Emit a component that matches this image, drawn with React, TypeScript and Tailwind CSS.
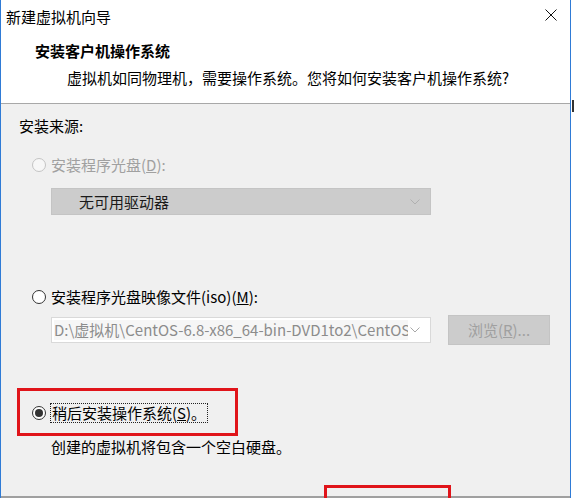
import React from "react";

const font = { fontFamily: '"Noto Sans CJK SC", "Noto Sans", sans-serif' };

function Radio({ state }: { state: "disabled" | "off" | "on" }) {
  if (state === "disabled") {
    return <span className="block w-[14px] h-[14px] rounded-full border border-[#c4c4c4] bg-[#f7f7f7] shrink-0" />;
  }
  if (state === "off") {
    return <span className="block w-[14px] h-[14px] rounded-full border border-[#333333] bg-white shrink-0" />;
  }
  return (
    <span className="flex items-center justify-center w-[14px] h-[14px] rounded-full border border-[#333333] bg-white shrink-0">
      <span className="block w-[8px] h-[8px] rounded-full bg-[#333333]" />
    </span>
  );
}

function Chevron({ color }: { color: string }) {
  return (
    <svg width="10" height="6" viewBox="0 0 10 6" className="shrink-0">
      <polyline points="0.5,0.5 5,5 9.5,0.5" fill="none" stroke={color} strokeWidth="1" />
    </svg>
  );
}

export default function App() {
  return (
    <div className="flex w-[574px] h-[498px] bg-white overflow-hidden" style={font}>
      <div className="relative flex flex-col w-[571px] h-[498px] border-x border-[#2f7bd6] shrink-0">
        {/* Header */}
        <div className="bg-white h-[104px] border-b border-[#a8a8a8] shrink-0 flex flex-col">
          <div className="flex items-start mt-[7px] pl-[5px] pr-[13px] h-[20px]">
            <span className="text-[15px] leading-[20px] text-black">新建虚拟机向导</span>
            <div className="flex-1" />
            <svg width="12" height="12" viewBox="0 0 12 12" className="mt-[2px]">
              <line x1="0.5" y1="0.5" x2="11.5" y2="11.5" stroke="#111" strokeWidth="1" />
              <line x1="11.5" y1="0.5" x2="0.5" y2="11.5" stroke="#111" strokeWidth="1" />
            </svg>
          </div>
          <div className="mt-[14px] pl-[34px] text-[15px] leading-[20px] font-bold text-black">安装客户机操作系统</div>
          <div className="mt-[7px] pl-[66px] text-[15px] leading-[20px] text-black whitespace-nowrap">
            虚拟机如同物理机，需要操作系统。您将如何安装客户机操作系统?
          </div>
        </div>

        {/* Body */}
        <div className="flex-1 flex flex-col bg-[#f0f0f0] text-[15px] leading-[20px]">
          <div className="mt-[12px] pl-[18px] text-black">安装来源:</div>

          <div className="mt-[19px] pl-[31px] flex items-center gap-[5px]">
            <Radio state="disabled" />
            <span className="text-[#a0a0a0]">
              安装程序光盘(<span className="underline">D</span>):
            </span>
          </div>

          <div className="mt-[13px] ml-[50px] w-[380px] h-[27px] bg-[#cccccc] border border-[#c4c4c4] flex items-center pl-[27px] pr-[10px]">
            <span className="text-[#1a1a1a] flex-1">无可用驱动器</span>
            <Chevron color="#b0b0b0" />
          </div>

          <div className="mt-[72px] pl-[31px] flex items-center gap-[5px]">
            <Radio state="off" />
            <span className="text-black">
              安装程序光盘映像文件(iso)(<span className="underline">M</span>):
            </span>
          </div>

          <div className="mt-[8px] ml-[50px] flex items-center h-[30px]">
            <div className="w-[380px] h-[26px] bg-white border border-[#d9d9d9] flex items-center pl-[2px] pr-[10px]">
              <div className="w-[354px] overflow-hidden whitespace-nowrap text-[#8c8c8c] bg-[#f6f6f6]">
                D:\虚拟机\CentOS-6.8-x86_64-bin-DVD1to2\CentOS-6.8-x86_64-bin-DVD1.iso
              </div>
              <div className="flex-1" />
              <Chevron color="#a8a8a8" />
            </div>
            <div className="ml-[17px] w-[102px] h-[30px] bg-[#cccccc] border border-[#c4c4c4] flex items-center justify-center text-[#a0a0a0]">
              浏览(<span className="underline">R</span>)...
            </div>
          </div>

          <div className="mt-[58px] pl-[31px] flex items-center gap-[4px]">
            <Radio state="on" />
            <span className="text-black border border-dotted border-[#222] px-[1px] leading-[18px]">
              稍后安装操作系统(<span className="underline">S</span>)。
            </span>
          </div>

          <div className="mt-[14px] pl-[50px] text-black">创建的虚拟机将包含一个空白硬盘。</div>

          <div className="flex-1" />
          <div className="h-[2px] bg-[#a0a0a0]" />
        </div>

        {/* Annotation boxes */}
        <div className="absolute left-[16px] top-[388px] w-[221px] h-[48px] border-[3px] border-[#e0141a]" />
        <div className="absolute left-[323px] top-[485px] w-[127px] h-[20px] border-[3px] border-[#e0141a]" />
      </div>
      <div className="flex-1 bg-white relative">
        <div className="absolute left-[1px] top-[100px] w-[2px] h-[12px] bg-[#333]" />
      </div>
    </div>
  );
}
